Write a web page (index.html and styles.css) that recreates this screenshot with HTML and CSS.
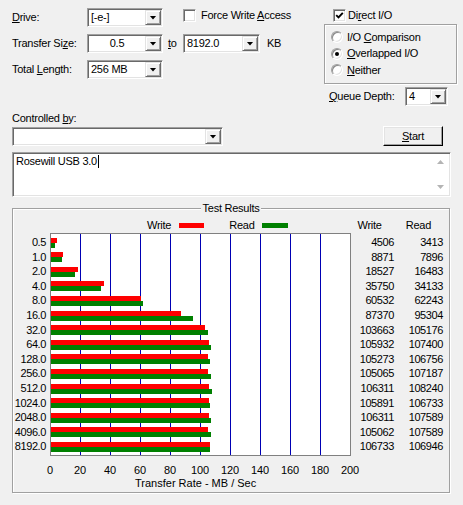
FILE: index.html
```html
<!DOCTYPE html>
<html>
<head>
<meta charset="utf-8">
<link rel="stylesheet" href="styles.css">
</head>
<body>
<div class="win">
  <div class="top">
    <div class="params">
      <div class="prow">
        <span class="lbl"><u>D</u>rive:</span>
        <div class="combo w76"><span class="val">[-e-]</span><span class="dd"></span></div>
        <div class="chk force"><span class="box"></span><span>Force Write <u>A</u>ccess</span></div>
      </div>
      <div class="prow">
        <span class="lbl">Transfer Si<u>z</u>e:</span>
        <div class="combo w76"><span class="val center">0.5</span><span class="dd"></span></div>
        <span class="to"><u>t</u>o</span>
        <div class="combo w77"><span class="val">8192.0</span><span class="dd"></span></div>
        <span class="kb">KB</span>
      </div>
      <div class="prow">
        <span class="lbl">Total <u>L</u>ength:</span>
        <div class="combo w76"><span class="val">256 MB</span><span class="dd"></span></div>
      </div>
    </div>
    <div class="io">
      <div class="chk direct">
        <span class="box"><svg width="9" height="9" viewBox="0 0 9 9"><path d="M1.2 4.2l2.3 2.3L7.8 1.8" stroke="#000" stroke-width="1.9" fill="none"/></svg></span>
        <span>Di<u>r</u>ect I/O</span>
      </div>
      <div class="rgroup">
        <div class="rrow"><span class="radio"></span><span>I/O <u>C</u>omparison</span></div>
        <div class="rrow"><span class="radio on"></span><span><u>O</u>verlapped I/O</span></div>
        <div class="rrow"><span class="radio"></span><span><u>N</u>either</span></div>
      </div>
      <div class="qrow">
        <span class="qlbl"><u>Q</u>ueue Depth:</span>
        <div class="combo w43"><span class="val">4</span><span class="dd"></span></div>
      </div>
    </div>
  </div>

  <div class="ctrl-lbl">Controlled <u>b</u>y:</div>
  <div class="ctrl-row">
    <div class="combo w211 h19"><span class="val"></span><span class="dd"></span></div>
    <div class="btn"><span><u>S</u>tart</span></div>
  </div>

  <div class="memo">
    <div class="memo-text">Rosewill USB 3.0<span class="caret"></span></div>
    <div class="sbar"><span class="sup"></span><span class="sdn"></span></div>
  </div>

  <div class="group">
    <div class="gtitle">Test Results</div>
    <div class="legend">
      <span class="lg-w">Write</span><span class="sw sw-red"></span>
      <span class="lg-r">Read</span><span class="sw sw-green"></span>
      <span class="hd-w">Write</span><span class="hd-r">Read</span>
    </div>
    <div class="chart">
      <div class="ylabels">
        <div>0.5</div><div>1.0</div><div>2.0</div><div>4.0</div><div>8.0</div>
        <div>16.0</div><div>32.0</div><div>64.0</div><div>128.0</div><div>256.0</div>
        <div>512.0</div><div>1024.0</div><div>2048.0</div><div>4096.0</div><div>8192.0</div>
      </div>
      <div class="plot">
        <div class="brow"><div class="bw" style="width:5.76px"></div><div class="bg" style="width:4.12px"></div></div>
        <div class="brow"><div class="bw" style="width:12.31px"></div><div class="bg" style="width:10.84px"></div></div>
        <div class="brow"><div class="bw" style="width:26.79px"></div><div class="bg" style="width:23.72px"></div></div>
        <div class="brow"><div class="bw" style="width:52.63px"></div><div class="bg" style="width:50.2px"></div></div>
        <div class="brow"><div class="bw" style="width:89.8px"></div><div class="bg" style="width:92.36px"></div></div>
        <div class="brow"><div class="bw" style="width:130.06px"></div><div class="bg" style="width:141.96px"></div></div>
        <div class="brow"><div class="bw" style="width:154.49px"></div><div class="bg" style="width:156.76px"></div></div>
        <div class="brow"><div class="bw" style="width:157.9px"></div><div class="bg" style="width:160.1px"></div></div>
        <div class="brow"><div class="bw" style="width:156.91px"></div><div class="bg" style="width:159.13px"></div></div>
        <div class="brow"><div class="bw" style="width:156.6px"></div><div class="bg" style="width:159.78px"></div></div>
        <div class="brow"><div class="bw" style="width:158.47px"></div><div class="bg" style="width:161.36px"></div></div>
        <div class="brow"><div class="bw" style="width:157.84px"></div><div class="bg" style="width:159.1px"></div></div>
        <div class="brow"><div class="bw" style="width:158.47px"></div><div class="bg" style="width:160.38px"></div></div>
        <div class="brow"><div class="bw" style="width:156.59px"></div><div class="bg" style="width:160.38px"></div></div>
        <div class="brow"><div class="bw" style="width:159.1px"></div><div class="bg" style="width:159.42px"></div></div>
      </div>
      <div class="vals vw">
        <div>4506</div><div>8871</div><div>18527</div><div>35750</div><div>60532</div>
        <div>87370</div><div>103663</div><div>105932</div><div>105273</div><div>105065</div>
        <div>106311</div><div>105891</div><div>106311</div><div>105062</div><div>106733</div>
      </div>
      <div class="vals vr">
        <div>3413</div><div>7896</div><div>16483</div><div>34133</div><div>62243</div>
        <div>95304</div><div>105176</div><div>107400</div><div>106756</div><div>107187</div>
        <div>108240</div><div>106733</div><div>107589</div><div>107589</div><div>106946</div>
      </div>
    </div>
    <div class="xaxis">
      <span>0</span><span>20</span><span>40</span><span>60</span><span>80</span><span>100</span>
      <span>120</span><span>140</span><span>160</span><span>180</span><span>200</span>
    </div>
    <div class="axtitle">Transfer Rate - MB / Sec</div>
  </div>
</div>
</body>
</html>
```
FILE: styles.css
```css
* { box-sizing: border-box; }
body {
  margin: 0;
  background: #f0f0f0;
  font: 11px/13px "Liberation Sans", Arial, sans-serif;
  letter-spacing: -0.25px;
  color: #000;
}
u { text-decoration: underline; text-underline-offset: 1px; }
.win { width: 463px; height: 505px; overflow: hidden; background: #f0f0f0; }

/* top area */
.top { display: flex; padding: 8px 0 0 12px; height: 107px; }
.params { width: 312px; }
.prow { display: flex; align-items: center; height: 19px; margin-bottom: 7px; }
.lbl { width: 75px; }

.combo {
  height: 19px;
  background: #fff;
  border: 1px solid;
  border-color: #a0a0a0 #fff #fff #a0a0a0;
  box-shadow: inset 1px 1px 0 #696969, inset -1px -1px 0 #e3e3e3;
  padding: 1px;
  display: flex;
}
.w76 { width: 76px; }
.w77 { width: 77px; }
.w43 { width: 43px; }
.w211 { width: 211px; }
.val { flex: 1; padding-left: 2px; line-height: 15px; }
.val.center { text-align: center; padding-left: 0; }
.dd {
  width: 16px;
  background: #f0f0f0;
  border: 1px solid;
  border-color: #e3e3e3 #696969 #696969 #e3e3e3;
  box-shadow: inset 1px 1px 0 #fff, inset -1px -1px 0 #a0a0a0;
  display: flex;
  align-items: center;
  justify-content: center;
}
.dd::after {
  content: "";
  width: 7px;
  height: 4px;
  background: #000;
  clip-path: polygon(0 0, 100% 0, 50% 100%);
}

.chk { display: flex; align-items: center; }
.box {
  width: 13px;
  height: 13px;
  background: #fff;
  border: 1px solid;
  border-color: #a0a0a0 #fff #fff #a0a0a0;
  box-shadow: inset 1px 1px 0 #696969, inset -1px -1px 0 #e3e3e3;
  display: flex;
  align-items: center;
  justify-content: center;
}
.force { align-self: flex-start; margin: 1px 0 0 20px; }
.force .box { margin-right: 5px; }
.to { margin-left: 5px; width: 15px; }
.kb { margin-left: 7px; }

.io { width: 133px; }
.direct { margin: 1px 0 0 9px; height: 13px; }
.direct .box { margin-right: 2px; }
.rgroup {
  margin-top: 2px;
  height: 60px;
  border: 1px solid #a0a0a0;
  box-shadow: inset 1px 1px 0 #fff, 1px 1px 0 #fff;
  padding: 4px 0 0 6px;
}
.rrow { display: flex; align-items: center; height: 16.5px; }
.radio {
  width: 12px;
  height: 12px;
  border-radius: 50%;
  background: #fff;
  border: 1px solid;
  border-color: #a0a0a0 #fff #fff #a0a0a0;
  box-shadow: inset 1px 1px 0 #8a8a8a, inset -1px -1px 0 #e3e3e3;
  margin-right: 4px;
  display: flex;
  align-items: center;
  justify-content: center;
}
.radio.on::after {
  content: "";
  width: 4px;
  height: 4px;
  border-radius: 50%;
  background: #000;
}
.qrow { display: flex; align-items: center; margin-top: 3px; padding-left: 5px; height: 19px; }
.qlbl { width: 76px; }

/* controlled by */
.ctrl-lbl { margin: 5px 0 0 12px; line-height: 13px; }
.ctrl-row { display: flex; justify-content: space-between; padding: 1px 20px 0 12px; height: 21px; }
.ctrl-row .combo { margin-top: 1px; }
.btn {
  width: 60px;
  height: 20px;
  background: #f0f0f0;
  border: 1px solid;
  border-color: #fff #000 #000 #fff;
  box-shadow: inset -1px -1px 0 #a0a0a0, inset 1px 1px 0 #e3e3e3;
  display: flex;
  align-items: center;
  justify-content: center;
}

/* memo */
.memo {
  margin: 6px 0 0 12px;
  width: 439px;
  height: 45px;
  background: #fff;
  border: 1px solid;
  border-color: #a0a0a0 #fff #fff #a0a0a0;
  box-shadow: inset 1px 1px 0 #696969, inset -1px -1px 0 #e3e3e3;
  padding: 1px;
  display: flex;
}
.memo-text { flex: 1; padding: 1px 0 0 2px; }
.caret { display: inline-block; width: 1px; height: 13px; background: #000; vertical-align: top; margin-left: 1px; }
.sbar {
  width: 17px;
  display: flex;
  flex-direction: column;
  justify-content: space-between;
  align-items: center;
  padding: 6px 0 6px;
}
.sup, .sdn { width: 7px; height: 4px; background: #b4b4b4; }
.sup { clip-path: polygon(50% 0, 100% 100%, 0 100%); }
.sdn { clip-path: polygon(0 0, 100% 0, 50% 100%); }

/* group */
.group {
  margin: 11px 0 0 12px;
  width: 438px;
  height: 285px;
  border: 1px solid #a0a0a0;
  box-shadow: inset 1px 1px 0 #fff, 1px 1px 0 #fff;
  display: flex;
  flex-direction: column;
}
.gtitle { align-self: center; margin-top: -7px; background: #f0f0f0; padding: 0 2px; line-height: 13px; }
.legend { display: flex; align-items: center; height: 18px; padding-top: 2px; line-height: 13px; }
.lg-w { margin-left: 134px; }
.sw { height: 5px; }
.sw-red { width: 25px; margin-left: 8px; background: #ff0000; }
.lg-r { margin-left: 25px; }
.sw-green { width: 26px; margin-left: 7px; background: #008000; }
.hd-w { margin-left: 70px; }
.hd-r { margin-left: 24px; }

.chart { display: flex; height: 223px; }
.ylabels { width: 37px; padding: 2px 4px 0 0; text-align: right; letter-spacing: -0.4px; }
.ylabels div, .vals div { height: 14.6px; line-height: 14.6px; }
.plot {
  width: 301px;
  height: 223px;
  border: 1px solid #808080;
  background: #fff repeating-linear-gradient(90deg, transparent 0 29px, #0000b4 29px 30px);
  padding-bottom: 2px;
  display: flex;
  flex-direction: column;
}
.brow { height: 14.6px; padding-top: 3.6px; }
.bw { height: 5px; background: #ff0000; }
.bg { height: 5px; background: #008000; }
.vals { padding-top: 2px; text-align: right; letter-spacing: -0.4px; }
.vw { width: 43px; }
.vr { width: 49px; }

.xaxis { display: flex; padding-left: 22px; margin-top: 8px; line-height: 13px; letter-spacing: -0.2px; }
.xaxis span { width: 30px; text-align: center; }
.axtitle { padding-left: 122px; line-height: 13px; letter-spacing: 0; }
```
